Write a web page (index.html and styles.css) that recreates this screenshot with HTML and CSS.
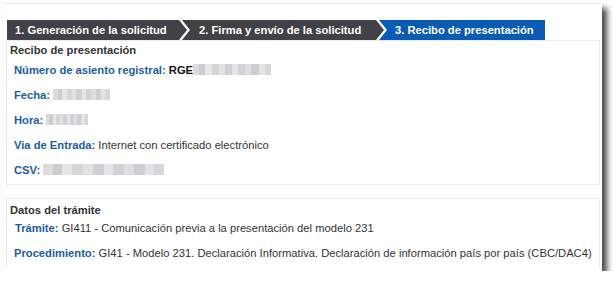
FILE: index.html
```html
<!DOCTYPE html>
<html lang="es">
<head>
<meta charset="utf-8">
<title>Recibo de presentación</title>
<link rel="stylesheet" href="styles.css">
</head>
<body>
<div class="panel">
  <div class="tabs">
    <div class="tab tab-first">1. Generación de la solicitud</div>
    <div class="tab tab-mid">2. Firma y envío de la solicitud</div>
    <div class="tab tab-last active">3. Recibo de presentación</div>
  </div>
  <div class="box box-recibo">
    <div class="box-title">Recibo de presentación</div>
    <div class="row"><span class="label">Número de asiento registral:</span> <span class="strong">RGE</span><span class="blur blur-rge"></span></div>
    <div class="row"><span class="label">Fecha:</span> <span class="blur blur-fecha"></span></div>
    <div class="row"><span class="label">Hora:</span> <span class="blur blur-hora"></span></div>
    <div class="row"><span class="label">Via de Entrada:</span> Internet con certificado electrónico</div>
    <div class="row"><span class="label">CSV:</span> <span class="blur blur-csv"></span></div>
  </div>
  <div class="box box-datos">
    <div class="box-title">Datos del trámite</div>
    <div class="row row-tramite"><span class="label">Trámite:</span> GI411 - Comunicación previa a la presentación del modelo 231</div>
    <div class="row"><span class="label">Procedimiento:</span> GI41 - Modelo 231. Declaración Informativa. Declaración de información país por país (CBC/DAC4)</div>
  </div>
</div>
</body>
</html>
```

FILE: styles.css
```css
html, body {
  margin: 0;
  padding: 0;
  background: #fff;
}
body {
  font-family: "Liberation Sans", Arial, sans-serif;
  font-size: 11.2px;
  color: #333;
}
.panel {
  margin: 3px 0 0 3px;
  width: 594px;
  height: 251px;
  padding: 16px 2px 0 3px;
  border-top: 1px solid #ececec;
  background: #fff;
  box-shadow: 5px 5px 6px rgba(0, 0, 0, 0.72);
}
.tabs {
  display: flex;
  height: 20px;
  margin-left: 1px;
}
.tab {
  height: 20px;
  line-height: 20px;
  color: #fff;
  font-weight: bold;
  background: #404247;
  box-sizing: border-box;
  white-space: nowrap;
}
.tab-first {
  width: 180px;
  padding-left: 8px;
  clip-path: polygon(0 0, calc(100% - 8px) 0, 100% 50%, calc(100% - 8px) 100%, 0 100%);
}
.tab-mid {
  width: 202px;
  margin-left: -5px;
  padding-left: 17px;
  clip-path: polygon(0 0, calc(100% - 8px) 0, 100% 50%, calc(100% - 8px) 100%, 0 100%, 8px 50%);
}
.tab-last {
  width: 166px;
  margin-left: -5px;
  padding-left: 16px;
  clip-path: polygon(0 0, 100% 0, 100% 100%, 0 100%, 8px 50%);
}
.tab.active {
  background: #0a5bb6;
}
.box {
  border: 1px solid #e5ebf1;
  padding-left: 3px;
}
.box-recibo {
  padding-top: 2px;
  padding-bottom: 7px;
}
.box-datos {
  margin-top: 13px;
  padding-top: 4px;
  padding-bottom: 8px;
  border-bottom: none;
}
.box-title {
  font-weight: bold;
  color: #333;
  line-height: 14px;
  margin-bottom: 6px;
}
.box-datos .box-title {
  margin-bottom: 4px;
}
.row {
  line-height: 14px;
  margin-bottom: 11px;
  padding-left: 4px;
  white-space: nowrap;
}
.row:last-child {
  margin-bottom: 0;
}
.row-tramite {
  padding-left: 5px;
}
.label {
  font-weight: bold;
  color: #1b5ca6;
}
.strong {
  font-weight: bold;
  color: #111;
}
.blur {
  display: inline-block;
  height: 11px;
  vertical-align: -1px;
  background:
    linear-gradient(90deg,
      #d6d6d8 0 8%, #c4c4c8 8% 16%, #e2e2e2 16% 24%, #cfcfd3 24% 33%,
      #dcdcdc 33% 41%, #c8c8cc 41% 50%, #e0e0e2 50% 58%, #cbcbcf 58% 67%,
      #d9d9db 67% 75%, #c6c6ca 75% 84%, #dedee0 84% 92%, #d0d0d4 92% 100%);
  opacity: 0.85;
}
.blur-rge { width: 78px; }
.blur-fecha { width: 57px; }
.blur-hora { width: 42px; }
.blur-csv { width: 121px; }
```
